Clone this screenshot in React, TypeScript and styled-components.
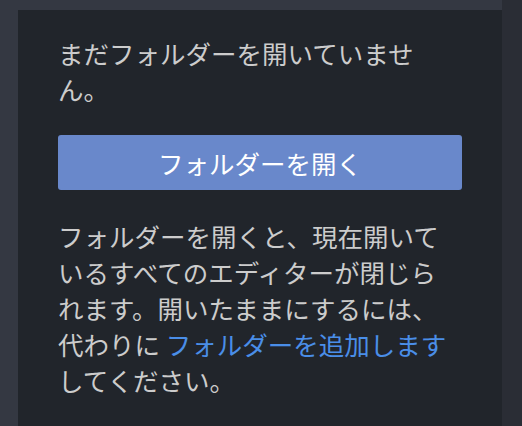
import * as React from 'react';
import styled, { createGlobalStyle } from 'styled-components';

const GlobalStyle = createGlobalStyle`
    html, body {
        margin: 0;
        padding: 0;
        background: #333842;
    }
    body {
        font-family: "Noto Sans CJK JP", "Noto Sans", sans-serif;
    }
`;

const Page = styled.div`
    display: flex;
    height: 100vh;
    overflow: hidden;
`;

const Workbench = styled.div`
    flex: 1;
    display: flex;
    padding: 10px 0 0 18px;
    background: #343842;
`;

const RightStrip = styled.div`
    width: 20px;
    background: #2a2d35;
`;

const Panel = styled.div`
    flex: 1;
    background: #21252b;
    padding: 25px 40px;
    color: #cccccc;
    font-size: 25.5px;
    line-height: 36px;
`;

const Message = styled.p`
    margin: 0;
    max-width: 392px;
`;

const PrimaryButton = styled.button`
    display: block;
    width: 100%;
    height: 55px;
    margin: 28px 0;
    border: none;
    border-radius: 3px;
    background: #6988cb;
    color: #ffffff;
    font-family: inherit;
    font-size: 25.5px;
    line-height: 36px;
    cursor: pointer;
`;

const Link = styled.a`
    color: #4a8ee8;
    text-decoration: none;
    cursor: pointer;
`;

export default function App() {
    return <>
        <GlobalStyle />
        <Page>
            <Workbench>
                <Panel>
                    <Message>まだフォルダーを開いていません。</Message>
                    <PrimaryButton>フォルダーを開く</PrimaryButton>
                    <Message>
                        フォルダーを開くと、現在開いているすべてのエディターが閉じられます。開いたままにするには、代わりに <Link>フォルダーを追加します</Link>してください。
                    </Message>
                </Panel>
            </Workbench>
            <RightStrip />
        </Page>
    </>;
}
